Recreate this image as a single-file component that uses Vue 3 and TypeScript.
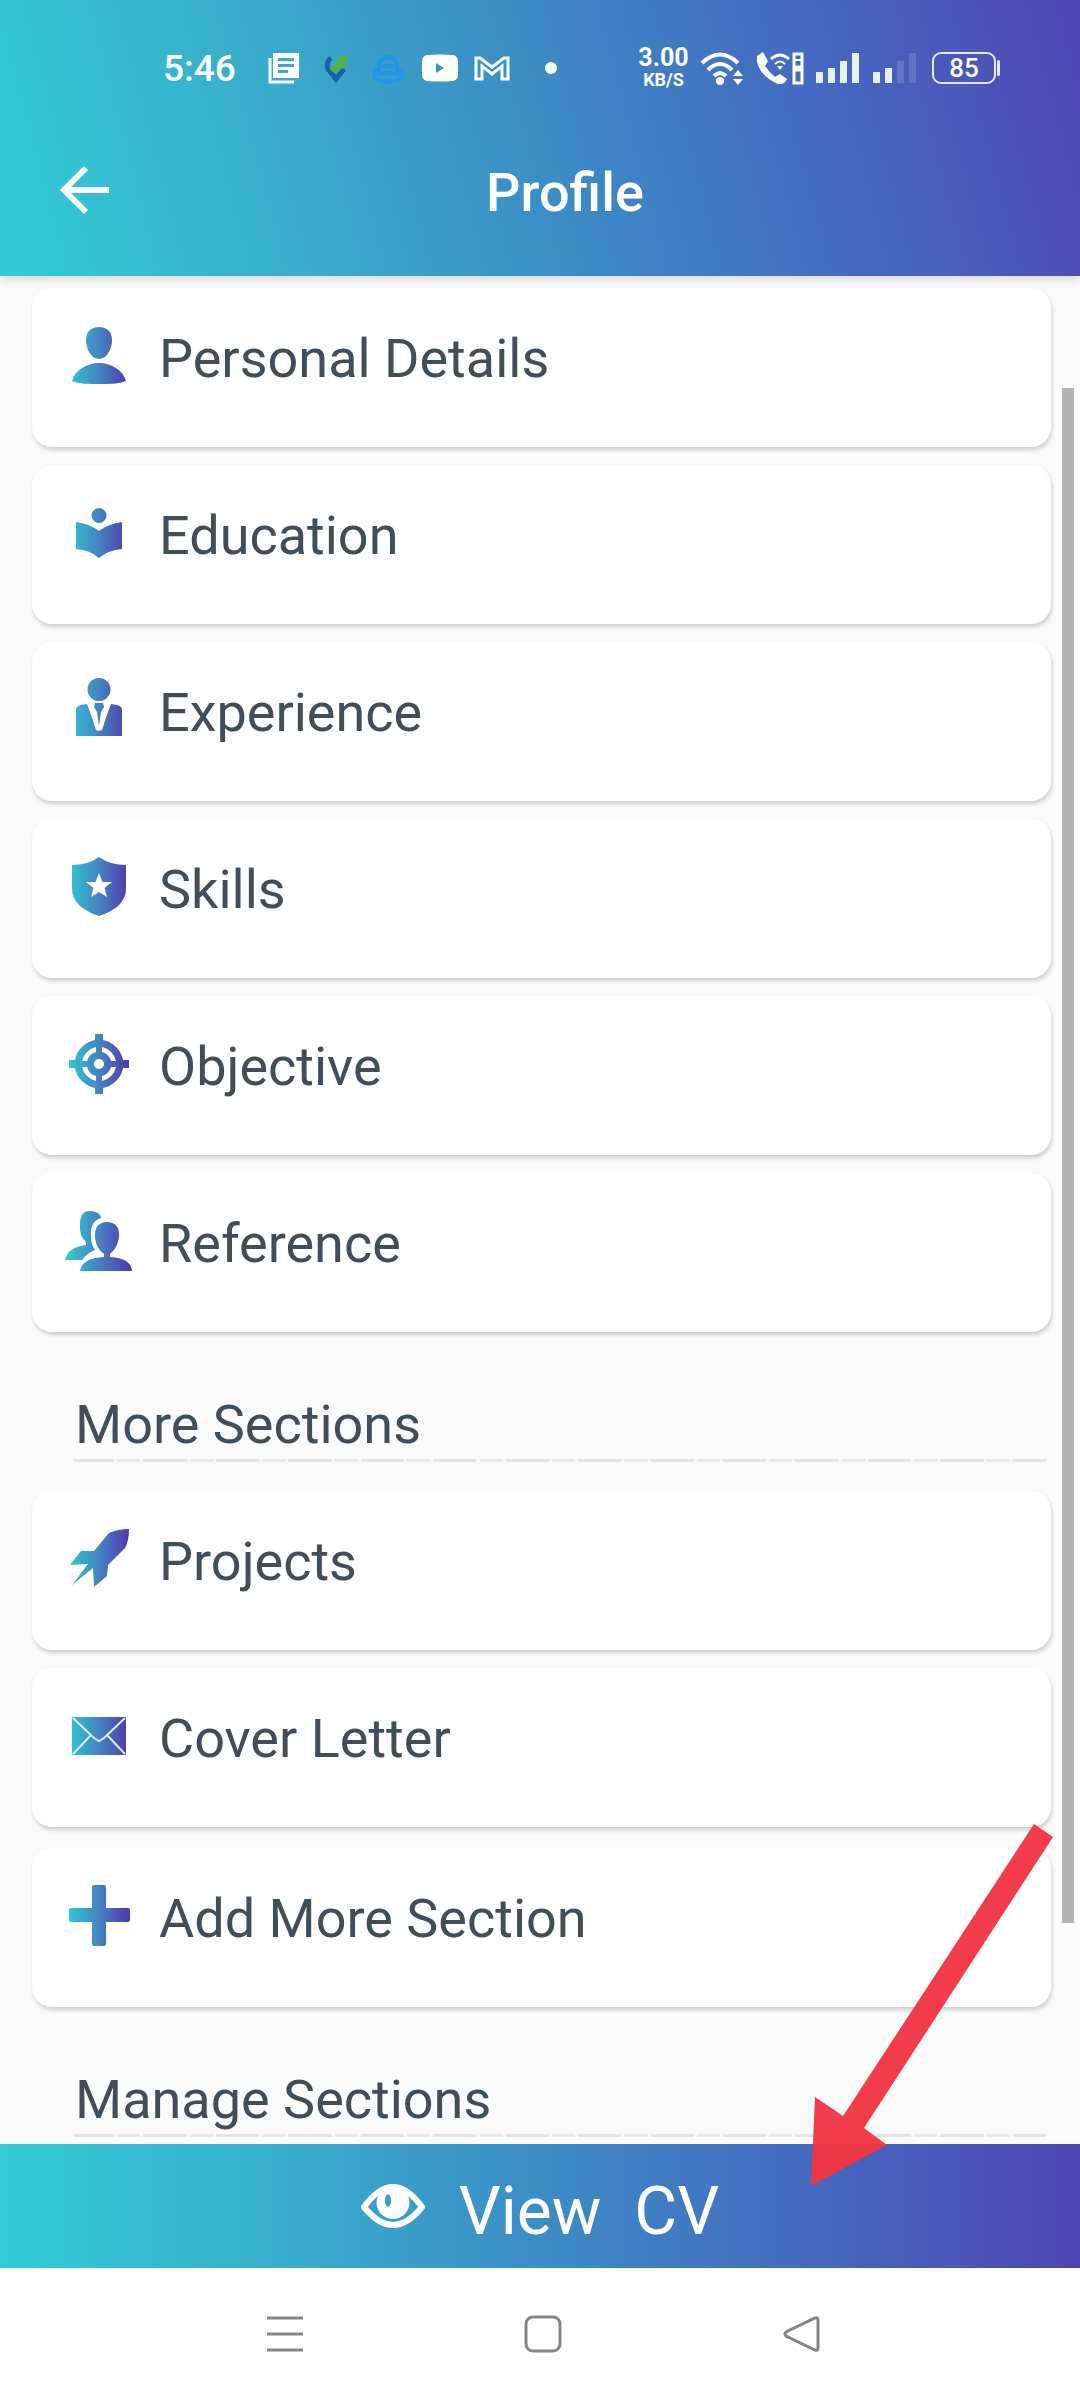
<script setup lang="ts">
interface Item {
  id: string
  label: string
}

const mainSections: Item[] = [
  { id: 'personal', label: 'Personal Details' },
  { id: 'education', label: 'Education' },
  { id: 'experience', label: 'Experience' },
  { id: 'skills', label: 'Skills' },
  { id: 'objective', label: 'Objective' },
  { id: 'reference', label: 'Reference' },
]

const moreSections: Item[] = [
  { id: 'projects', label: 'Projects' },
  { id: 'cover', label: 'Cover Letter' },
]

const addSection: Item[] = [{ id: 'add', label: 'Add More Section' }]

const groups = [
  { key: 'main', title: '', lists: [mainSections] },
  { key: 'more', title: 'More Sections', lists: [moreSections, addSection] },
  { key: 'manage', title: 'Manage Sections', lists: [] as Item[][] },
]

// Each icon is a set of paths painted with the shared brand gradient.
const icons: Record<string, string[]> = {
  personal: [
    'M34 5C42 5 47 10 47 18C47 28 41 37 34 37C27 37 21 28 21 18C21 10 26 5 34 5Z',
    'M7 59C10 48 22 41 34 41C46 41 58 48 61 59C54 62 44 62 34 62C24 62 14 62 7 59Z',
  ],
  education: [
    'M34 9A7 7 0 0 1 34 24A7 7 0 0 1 34 9Z',
    'M11 23Q25 25 34 32Q43 25 57 23V50Q43 51 34 59Q25 51 11 50Z',
  ],
  experience: [
    'M34 2A11 11 0 0 1 34 25A11 11 0 0 1 34 2Z',
    'M16 29L22 28L32 54L34 55L36 54L46 28L52 29Q57 30 57 34V60H11V34Q11 30 16 29Z',
    'M30 27H38L39 31L36 36L34 51L32 36L29 31Z',
  ],
  skills: [
    'M34 4Q45 12 61 12V36Q61 54 34 63Q7 54 7 36V12Q23 12 34 4ZM34 20L30.5 29H21L28.5 35L26 44L34 39L42 44L39.5 35L47 29H37.5Z',
  ],
  objective: [
    'M30 4H38V10A25 25 0 0 1 58 30H64V38H58A25 25 0 0 1 38 58V64H30V58A25 25 0 0 1 10 38H4V30H10A25 25 0 0 1 30 10ZM31 17A18 18 0 0 0 17 31H22A13 13 0 0 1 31 22ZM37 17V22A13 13 0 0 1 46 31H51A18 18 0 0 0 37 17ZM17 37A18 18 0 0 0 31 51V46A13 13 0 0 1 22 37ZM51 37H46A13 13 0 0 1 37 46V51A18 18 0 0 0 51 37ZM34 29A5 5 0 0 0 34 39A5 5 0 0 0 34 29Z',
  ],
  reference: [
    'M25 4C31 4 36 7 36 11C28 13 25 21 26 30Q26 37 30 43Q22 46 17 53H0Q3 40 21 38V35Q14 29 15 17Q15 4 25 4Z',
    'M42 15C50 15 54 20 54 28C54 36 50 43 45 47V50Q66 51 67 64H15Q17 51 39 50V47C33 43 30 36 30 28C30 20 34 15 42 15Z',
  ],
  projects: [
    'M64 4Q64 16 60 23L43 40L42 51L29 62L28 43L7 60L23 39L5 40L16 26H29L44 8Q53 4 64 4Z',
  ],
  cover: ['M7 15H61V53H7Z'],
  add: ['M29 3H39Q41 3 41 5V26H63Q65 26 65 28V38Q65 40 63 40H41V62Q41 64 39 64H29Q27 64 27 62V40H6Q4 40 4 38V28Q4 26 6 26H27V5Q27 3 29 3Z'],
}
</script>

<template>
  <div class="screen">
    <header class="header">
      <div class="status">
        <div class="status-left">
          <span class="clock">5:46</span>
          <svg viewBox="0 0 36 36"><path fill="#fff" fill-rule="evenodd" d="M7 3H33V28H7ZM12 8V11H28V8ZM12 14V17H28V14ZM12 20V23H22V20Z" /><path fill="none" stroke="#fff" stroke-width="3" d="M4 8V32H28" /></svg>
          <svg viewBox="0 0 36 36"><path fill="none" stroke="#1560a8" stroke-width="5" d="M13 8A9 9 0 0 0 10 19L18 29L26 19" /><path fill="#4fb34a" d="M22 6L30 5L28 16L16 23L11 18L16 15Z" /></svg>
          <svg viewBox="0 0 36 36"><path fill="none" stroke="#2196e8" stroke-width="4" d="M9 16A9 9 0 0 1 27 16V23H9ZM7 20Q2 22 5 28Q10 32 18 32Q26 32 31 28Q34 22 29 20M12 16H24" /></svg>
          <svg viewBox="0 0 36 36"><path fill="#fff" fill-rule="evenodd" d="M5 5Q18 4 31 5Q36 6 36 12V24Q36 30 31 31Q18 32 5 31Q0 30 0 24V12Q0 6 5 5ZM14 13V23L22 18Z" /></svg>
          <svg viewBox="0 0 36 36"><path fill="none" stroke="#fff" stroke-width="3" d="M2 29V8H6L18 17L30 8H34V29H28V16L18 24L8 16V29Z" /></svg>
          <svg viewBox="0 0 36 36"><circle cx="25" cy="18" r="6" fill="#fff" /></svg>
        </div>
        <div class="status-right">
          <span class="speed"><b>3.00</b><small>KB/S</small></span>
          <svg class="w44" viewBox="0 0 44 36"><g fill="none" stroke="#fff" stroke-width="4"><path d="M2 13Q20 -4 38 13" /><path d="M8 20Q20 8 32 20" /><path d="M14 26Q20 20 26 26" /></g><circle cx="20" cy="31" r="4" fill="#fff" /><path fill="#fff" d="M38 20L43 26H33ZM33 29H43L38 35Z" /></svg>
          <svg class="w48" viewBox="0 0 48 36"><path fill="#fff" d="M1 6L7 2L12 11L9 16Q13 22 19 27L24 24L31 29Q29 35 22 34Q5 27 1 12Z" /><path fill="none" stroke="#fff" stroke-width="3" d="M15 9Q24 1 33 9M38 4H46V17H38ZM38 20H46V33H38Z" /><path fill="none" stroke="#fff" stroke-width="2" d="M19 14Q24 9 29 14M39 10H45" /><path fill="#fff" d="M21 16H27L24 20Z" /></svg>
          <svg class="w44" viewBox="0 0 44 36"><path fill="#e8f0ff" d="M0 22H7V33H0ZM12 18H19V33H12ZM24 11H31V33H24ZM36 3H43V33H36Z" /></svg>
          <svg class="w44" viewBox="0 0 44 36"><path fill="#e8f0ff" d="M1 22H8V33H1ZM13 18H20V33H13Z" /><path fill="#fff" opacity=".14" d="M25 11H32V33H25ZM37 3H44V33H37Z" /></svg>
          <span class="battery">85</span>
        </div>
      </div>
      <div class="toolbar">
        <button class="back" type="button" aria-label="Back">
          <svg viewBox="0 0 58 58"><path d="M53 29H9M30 7L8 29L30 51" fill="none" stroke="#fff" stroke-width="6" /></svg>
        </button>
        <h1>Profile</h1>
      </div>
    </header>

    <main class="content">
      <div class="sections">
        <section v-for="group in groups" :key="group.key">
          <h2 v-if="group.title">{{ group.title }}</h2>
          <ul v-for="(list, index) in group.lists" :key="index">
            <li v-for="item in list" :key="item.id">
              <button class="card" type="button">
                <svg class="icon" viewBox="0 0 68 68">
                  <path v-for="d in icons[item.id]" :key="d" :d="d" fill="url(#brand)" fill-rule="evenodd" />
                  <path v-if="item.id === 'cover'" d="M8 16L29 36L34 39L39 36L60 16M8 52L26 33M60 52L42 33" fill="none" stroke="#dcecff" stroke-width="2" />
                  <path v-if="item.id === 'experience'" d="M25 28L33 54M43 28L35 54" fill="none" stroke="#fff" stroke-width="4" />
                </svg>
                <span>{{ item.label }}</span>
              </button>
            </li>
          </ul>
        </section>
      </div>
      <div class="track"><div class="thumb"></div></div>
    </main>

    <div class="footer">
      <button class="view" type="button">
        <svg viewBox="0 0 64 48"><path d="M3 25Q32 -15 61 25Q32 61 3 25Z" fill="none" stroke="#fff" stroke-width="6" /><path fill="#fff" fill-rule="evenodd" d="M32 4A16 16 0 0 1 32 37A16 16 0 0 1 32 4ZM27 12A5 7 0 0 0 27 25A5 7 0 0 0 27 12Z" /></svg>
        <span>View&nbsp; CV</span>
      </button>
      <svg class="pointer" viewBox="0 0 244 364"><path fill="#f23645" fill-opacity=".97" d="M224 1L243 14L54 305L77 322L1 363L5 274L33 293Z" /></svg>
    </div>

    <nav class="system" aria-label="System navigation">
      <button type="button" aria-label="Recent apps"><svg viewBox="0 0 40 40"><path d="M2 4H38M2 20H38M2 36H38" /></svg></button>
      <button type="button" aria-label="Home"><svg viewBox="0 0 40 40"><rect x="3" y="3" width="34" height="34" rx="7" /></svg></button>
      <button type="button" aria-label="Back"><svg viewBox="0 0 40 40"><path d="M34 4Q37 3 37 6V34Q37 37 34 36L5 22Q3 20 5 18Z" /></svg></button>
    </nav>

    <svg class="defs" width="0" height="0" aria-hidden="true">
      <defs>
        <linearGradient id="brand" gradientUnits="userSpaceOnUse" x1="4" y1="0" x2="64" y2="0">
          <stop offset="0" stop-color="#2fc6d0" />
          <stop offset=".5" stop-color="#4483c2" />
          <stop offset="1" stop-color="#5237ad" />
        </linearGradient>
      </defs>
    </svg>
  </div>
</template>

<style>
body {
  margin: 0;
}
</style>

<style scoped>
.screen {
  --brand: #31ccd6, #38afcc 25%, #3c8cc5 50%, #4569c0 75%, #4f46b5;
  position: relative;
  display: flex;
  flex-direction: column;
  min-height: 100vh;
  overflow: hidden;
  background: #fafafa;
  color: #3f4e59;
  font-family: Roboto, sans-serif;
}
button {
  margin: 0;
  padding: 0;
  border: 0;
  background: none;
  color: inherit;
  font: inherit;
}
svg {
  display: block;
}
.header {
  position: relative;
  background: linear-gradient(75deg, var(--brand));
  box-shadow: 0 4px 8px rgba(0, 0, 0, 0.12);
  color: #fff;
}
.status {
  display: flex;
  align-items: center;
  justify-content: space-between;
  height: 72px;
  padding: 32px 80px 0 163px;
}
.status-left {
  display: flex;
  align-items: center;
  gap: 16px;
}
.status-left svg {
  width: 36px;
  height: 36px;
}
.clock {
  width: 87px;
  font-size: 37px;
  font-weight: 500;
}
.status-right {
  display: flex;
  align-items: center;
  gap: 12px;
}
.status-right svg {
  height: 36px;
}
.w44 {
  width: 44px;
}
.w48 {
  width: 48px;
}
.speed {
  display: flex;
  flex-direction: column;
  align-items: center;
  width: 49px;
}
.speed b {
  font-size: 25px;
  font-weight: 700;
  line-height: 24px;
}
.speed small {
  font-size: 18px;
  font-weight: 700;
  line-height: 20px;
}
.battery {
  position: relative;
  box-sizing: border-box;
  width: 64px;
  height: 32px;
  margin: 0 4px;
  border: 2px solid #e4e8fa;
  border-radius: 9px;
  font-size: 26px;
  font-weight: 500;
  line-height: 28px;
  text-align: center;
}
.battery::after {
  content: '';
  position: absolute;
  top: 6px;
  right: -6px;
  width: 3px;
  height: 16px;
  border-radius: 2px;
  background: #e4e8fa;
}
.toolbar {
  display: flex;
  align-items: center;
  height: 172px;
  padding: 0 64px 0 56px;
}
.back,
.back svg {
  width: 58px;
  height: 58px;
}
h1 {
  flex: 1;
  margin: 0;
  padding-top: 6px;
  font-size: 54px;
  font-weight: 500;
  line-height: 64px;
  text-align: center;
}
.content {
  display: flex;
  flex: 1;
  padding: 12px 0 7px 32px;
}
.sections {
  flex: 1;
}
ul {
  display: flex;
  flex-direction: column;
  gap: 18px;
  margin: 0;
  padding: 0;
  list-style: none;
}
ul + ul {
  margin-top: 21px;
}
.card {
  display: flex;
  align-items: flex-start;
  gap: 26px;
  width: 100%;
  padding: 34px 33px 51px;
  border-radius: 20px;
  background: #fff;
  box-shadow: 1px 3px 4px rgba(0, 0, 0, 0.18);
  font-size: 54px;
  line-height: 74px;
  text-align: left;
}
.icon {
  width: 68px;
  height: 68px;
}
h2 {
  margin: 59px 5px 29px 42px;
  padding-left: 1px;
  border-bottom: 3px solid transparent;
  border-image: repeating-linear-gradient(90deg, #e4e4e4 0 43px, #f8f8f8 43px 46px, #e9e9e9 46px 69px, #f8f8f8 69px 72px) 3;
  font-size: 54px;
  font-weight: 400;
  line-height: 68px;
}
section:last-child h2 {
  margin-bottom: 0;
}
.track {
  width: 29px;
}
.thumb {
  width: 12px;
  height: 83%;
  margin: 100px 0 0 11px;
  background: #b3b3b3;
}
.footer {
  position: relative;
  background: linear-gradient(90deg, var(--brand));
  color: #fff;
}
.view {
  display: flex;
  align-items: center;
  justify-content: center;
  gap: 34px;
  width: 100%;
  height: 124px;
  font-size: 66px;
  line-height: 80px;
}
.view span {
  padding-top: 12px;
}
.view svg {
  width: 64px;
  height: 48px;
}
.pointer {
  position: absolute;
  right: 26px;
  bottom: 81px;
  width: 244px;
  height: 364px;
  pointer-events: none;
}
.system {
  display: flex;
  justify-content: center;
  gap: 218px;
  height: 132px;
  padding-left: 5px;
  background: #fff;
}
.system svg {
  width: 40px;
  height: 40px;
  fill: none;
  stroke: #858585;
  stroke-width: 3;
}
.defs {
  position: absolute;
}
</style>
